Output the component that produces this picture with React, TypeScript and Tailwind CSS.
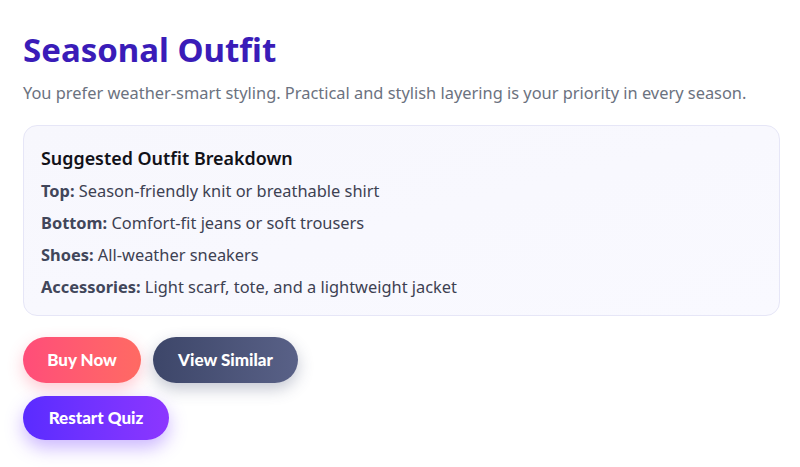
const items = [
  { label: 'Top:', value: 'Season-friendly knit or breathable shirt' },
  { label: 'Bottom:', value: 'Comfort-fit jeans or soft trousers' },
  { label: 'Shoes:', value: 'All-weather sneakers' },
  { label: 'Accessories:', value: 'Light scarf, tote, and a lightweight jacket' },
];

export default function App() {
  return (
    <div
      className="min-h-[467px] bg-white px-[23px] pt-[30px]"
      style={{ fontFamily: '"Noto Sans", "Open Sans", sans-serif' }}
    >
      <h1 className="text-[33px] font-bold leading-[40px] text-[#3a1cb8]">Seasonal Outfit</h1>
      <p className="mt-[11px] text-[16.4px] leading-[24px] text-[#6b7280]">
        You prefer weather-smart styling. Practical and stylish layering is your priority in every season.
      </p>

      <div className="mt-[20px] w-[757px] rounded-[14px] border border-[#e6e6f7] bg-gradient-to-br from-[#f7f7fd] to-[#f9f9ff] px-[17px] pt-[20px] pb-[12px]">
        <h2 className="text-[17.9px] font-semibold leading-[24px] text-[#111118]">Suggested Outfit Breakdown</h2>
        <div className="mt-[5px] flex flex-col">
          {items.map((it) => (
            <div key={it.label} className="text-[16.4px] leading-[32px] text-[#3d4152]">
              <span className="font-bold text-[#41465a]">{it.label}</span> {it.value}
            </div>
          ))}
        </div>
      </div>

      <div
        className="mt-[21px] flex flex-col gap-[13px]"
        style={{ fontFamily: 'Lato, "Noto Sans", sans-serif' }}
      >
        <div className="flex gap-[12px]">
          <button className="h-[46px] w-[118px] rounded-full bg-gradient-to-r from-[#ff4d79] to-[#ff6a63] text-[17px] font-black text-white shadow-[0_6px_16px_rgba(255,80,110,0.3)]">
            Buy Now
          </button>
          <button className="h-[46px] w-[145px] rounded-full bg-gradient-to-r from-[#3d4669] to-[#596187] text-[17px] font-black text-white shadow-[0_6px_16px_rgba(60,70,105,0.3)]">
            View Similar
          </button>
        </div>
        <div className="flex">
          <button className="h-[44px] w-[146px] rounded-full bg-gradient-to-r from-[#5a2bff] to-[#8c36ff] text-[17px] font-black text-white shadow-[0_8px_18px_rgba(110,50,255,0.35)]">
            Restart Quiz
          </button>
        </div>
      </div>
    </div>
  );
}
